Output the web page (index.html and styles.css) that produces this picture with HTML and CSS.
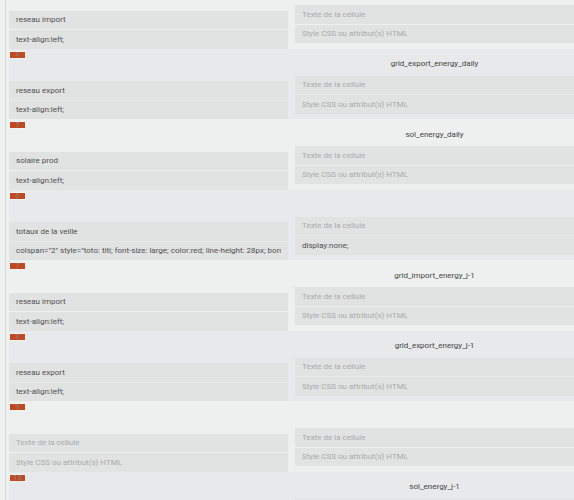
FILE: index.html
```html
<!DOCTYPE html>
<html lang="fr">
<head>
<meta charset="utf-8">
<title>Tableau</title>
<link rel="stylesheet" href="styles.css">
</head>
<body>
<div class="table">
  <div class="row">
    <div class="left">
      <span class="badge"></span>
      <div class="fields">
        <input class="field" value="reseau import">
        <input class="field" value="text-align:left;">
      </div>
    </div>
    <div class="right">
      <div class="label"></div>
      <div class="fields">
        <input class="field" placeholder="Texte de la cellule">
        <input class="field" placeholder="Style CSS ou attribut(s) HTML">
      </div>
    </div>
  </div>
  <div class="row">
    <div class="left">
      <span class="badge">4</span>
      <div class="fields">
        <input class="field" value="reseau export">
        <input class="field" value="text-align:left;">
      </div>
    </div>
    <div class="right">
      <div class="label">grid_export_energy_daily</div>
      <div class="fields">
        <input class="field" placeholder="Texte de la cellule">
        <input class="field" placeholder="Style CSS ou attribut(s) HTML">
      </div>
    </div>
  </div>
  <div class="row">
    <div class="left">
      <span class="badge">5</span>
      <div class="fields">
        <input class="field" value="solaire prod">
        <input class="field" value="text-align:left;">
      </div>
    </div>
    <div class="right">
      <div class="label">sol_energy_daily</div>
      <div class="fields">
        <input class="field" placeholder="Texte de la cellule">
        <input class="field" placeholder="Style CSS ou attribut(s) HTML">
      </div>
    </div>
  </div>
  <div class="row">
    <div class="left">
      <span class="badge">6</span>
      <div class="fields">
        <input class="field" value="totaux de la veille">
        <input class="field" value='colspan="2" style="toto: titi; font-size: large; color:red; line-height: 28px; border: none;"'>
      </div>
    </div>
    <div class="right">
      <div class="label"></div>
      <div class="fields">
        <input class="field" placeholder="Texte de la cellule">
        <input class="field" value="display:none;">
      </div>
    </div>
  </div>
  <div class="row">
    <div class="left">
      <span class="badge">7</span>
      <div class="fields">
        <input class="field" value="reseau import">
        <input class="field" value="text-align:left;">
      </div>
    </div>
    <div class="right">
      <div class="label">grid_import_energy_j-1</div>
      <div class="fields">
        <input class="field" placeholder="Texte de la cellule">
        <input class="field" placeholder="Style CSS ou attribut(s) HTML">
      </div>
    </div>
  </div>
  <div class="row">
    <div class="left">
      <span class="badge">8</span>
      <div class="fields">
        <input class="field" value="reseau export">
        <input class="field" value="text-align:left;">
      </div>
    </div>
    <div class="right">
      <div class="label">grid_export_energy_j-1</div>
      <div class="fields">
        <input class="field" placeholder="Texte de la cellule">
        <input class="field" placeholder="Style CSS ou attribut(s) HTML">
      </div>
    </div>
  </div>
  <div class="row">
    <div class="left">
      <span class="badge">9</span>
      <div class="fields">
        <input class="field" placeholder="Texte de la cellule">
        <input class="field" placeholder="Style CSS ou attribut(s) HTML">
      </div>
    </div>
    <div class="right">
      <div class="label"></div>
      <div class="fields">
        <input class="field" placeholder="Texte de la cellule">
        <input class="field" placeholder="Style CSS ou attribut(s) HTML">
      </div>
    </div>
  </div>
  <div class="row">
    <div class="left">
      <span class="badge">10</span>
      <div class="fields">
        <input class="field" placeholder="Texte de la cellule">
        <input class="field" placeholder="Style CSS ou attribut(s) HTML">
      </div>
    </div>
    <div class="right">
      <div class="label">sol_energy_j-1</div>
      <div class="fields">
        <input class="field" placeholder="Texte de la cellule">
        <input class="field" placeholder="Style CSS ou attribut(s) HTML">
      </div>
    </div>
  </div>
</div>
</body>
</html>
```

FILE: styles.css
```css
html, body {
  margin: 0;
  padding: 0;
  background: #eef0ef;
  overflow: hidden;
  font-family: Roboto, "Liberation Sans", sans-serif;
}

.table {
  margin-top: -22px;
  margin-left: 5px;
  border-left: 1px solid #d6d7d7;
  padding-left: 3px;
}

.row {
  display: grid;
  grid-template-columns: 279px 279px;
  column-gap: 7px;
  height: 70.5px;
  background: #eef0ef;
}

.row:nth-child(even) {
  background: #e8e9ea;
}

.left {
  display: flex;
  flex-direction: column;
  justify-content: space-between;
}

.right {
  display: flex;
  flex-direction: column;
}

.badge {
  align-self: flex-start;
  margin-top: 2px;
  width: 15px;
  height: 6px;
  border: 1px solid #f4f4f4;
  background: #c4481f;
  color: #8a7f7a;
  font-size: 8px;
  line-height: 6px;
  text-align: center;
  overflow: hidden;
}

.label {
  height: 27px;
  padding-top: 3px;
  box-sizing: border-box;
  display: flex;
  align-items: center;
  justify-content: center;
  font-size: 8px;
  color: #444;
}

.fields {
  display: flex;
  flex-direction: column;
  gap: 1px;
}

.field {
  display: block;
  box-sizing: border-box;
  width: 100%;
  height: 18.5px;
  margin: 0;
  border: none;
  outline: none;
  padding: 0 7px;
  background: #e1e2e2;
  font-family: Roboto, "Liberation Sans", sans-serif;
  font-size: 8px;
  color: #505050;
}

.field::placeholder {
  color: #aaa;
  opacity: 1;
}
```
